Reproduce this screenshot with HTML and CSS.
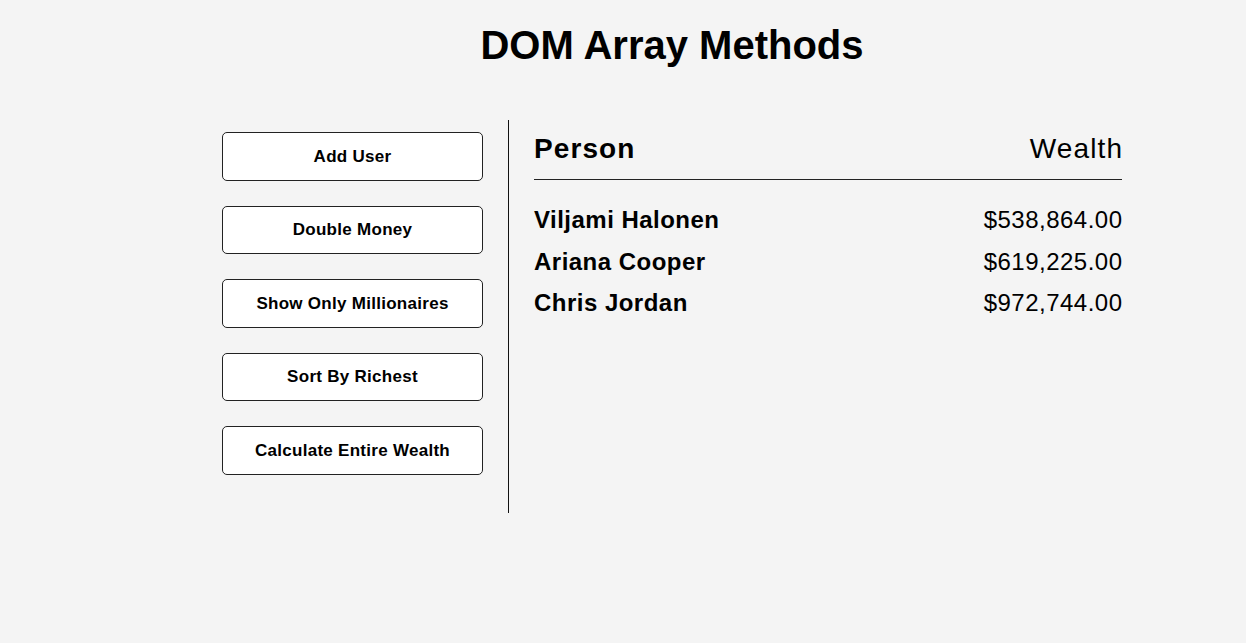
FILE: index.html
```html
<!DOCTYPE html>
<html lang="en">
<head>
<meta charset="UTF-8">
<title>DOM Array Methods</title>
<link rel="stylesheet" href="styles.css">
</head>
<body>
<div class="page">
  <h1 class="title">DOM Array Methods</h1>
  <div class="container">
    <aside class="sidebar">
      <button class="btn">Add User</button>
      <button class="btn">Double Money</button>
      <button class="btn">Show Only Millionaires</button>
      <button class="btn">Sort By Richest</button>
      <button class="btn">Calculate Entire Wealth</button>
    </aside>
    <main class="main">
      <h2 class="head"><strong>Person</strong><span class="head-wealth">Wealth</span></h2>
      <div class="list">
        <div class="person"><strong>Viljami Halonen</strong><span>$538,864.00</span></div>
        <div class="person"><strong>Ariana Cooper</strong><span>$619,225.00</span></div>
        <div class="person"><strong>Chris Jordan</strong><span>$972,744.00</span></div>
      </div>
    </main>
  </div>
</div>
</body>
</html>
```

FILE: styles.css
```css
* {
  box-sizing: border-box;
}

body {
  margin: 0;
  background: #f4f4f4;
  color: #000;
  font-family: "Liberation Sans", Arial, sans-serif;
}

.page {
  width: 900px;
  margin-left: 222px;
}

.title {
  margin: 0;
  padding-top: 22px;
  height: 120px;
  font-size: 40px;
  line-height: 46px;
  font-weight: bold;
  text-align: center;
}

.container {
  display: flex;
}

.sidebar {
  display: flex;
  flex-direction: column;
  gap: 25px;
  width: 287px;
  padding: 12px 25px 38px 0;
  border-right: 1px solid #111;
}

.btn {
  width: 261px;
  height: 48.5px;
  padding: 1px 0 0;
  background: #fff;
  border: 1px solid #222;
  border-radius: 5px;
  font-family: "Liberation Sans", Arial, sans-serif;
  font-size: 17px;
  font-weight: bold;
  letter-spacing: 0.28px;
  color: #000;
  cursor: pointer;
}

.main {
  flex: 1;
  padding-left: 25px;
}

.head {
  display: flex;
  justify-content: space-between;
  margin: 0;
  padding: 13px 0 14px;
  font-size: 28px;
  line-height: 32px;
  font-weight: normal;
  letter-spacing: 1.1px;
  border-bottom: 1px solid #222;
}

.head-wealth {
  font-weight: normal;
  margin-right: -1.1px;
}

.list {
  margin-top: 19px;
}

.person {
  display: flex;
  justify-content: space-between;
  font-size: 24px;
  line-height: 41.5px;
  letter-spacing: 0.48px;
}

.person span {
  margin-right: -0.48px;
}
```
